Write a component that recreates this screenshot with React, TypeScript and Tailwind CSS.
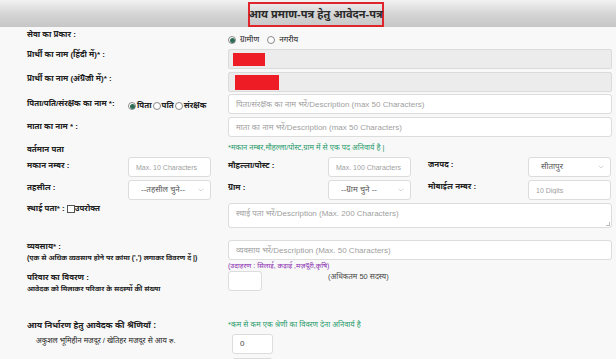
import { ChevronDown } from 'lucide-react';

const font = { fontFamily: '"Liberation Sans", "Noto Sans", sans-serif' };

function TextBox({ placeholder, value, small, className = '' }: { placeholder?: string; value?: string; small?: boolean; className?: string }) {
  return (
    <input
      readOnly
      placeholder={placeholder}
      defaultValue={value}
      className={`h-[20px] border border-[#dcdcdc] rounded-[3px] bg-white font-normal text-[#444] placeholder:text-[#a0a0a0] outline-none ${
        small ? 'px-[7px] text-[7px]' : 'px-[7px] text-[8px]'
      } ${className}`}
    />
  );
}

function SelectBox({ label }: { label: string }) {
  return (
    <div className="h-[20px] w-[83px] border border-[#dcdcdc] rounded-[3px] bg-white pl-[12px] pr-[5px] flex items-center justify-between text-[8px] font-normal text-[#555]">
      <span>{label}</span>
      <ChevronDown className="w-[8px] h-[8px] text-[#aaa]" strokeWidth={1.5} />
    </div>
  );
}

function Radio({ checked, label, tight }: { checked?: boolean; label: string; tight?: boolean }) {
  return (
    <span className={`flex items-center ${tight ? 'gap-[1px]' : 'gap-[4px]'}`}>
      <span className="w-[8px] h-[8px] rounded-full border border-[#8a8a8a] bg-white flex items-center justify-center">
        {checked && <span className="w-[5px] h-[5px] rounded-full bg-[#2f6d55]" />}
      </span>
      <span>{label}</span>
    </span>
  );
}

export default function App() {
  return (
    <div className="w-[616px] h-[359px] overflow-hidden bg-[#f8f8f8] text-[#222]" style={font}>
      {/* Header band */}
      <div className="h-[27px] bg-gradient-to-b from-[#f2f2f2] via-[#d6d6d6] to-[#c6c6c6] flex justify-center">
        <div className="mt-[2px] ml-[15px] w-[136px] h-[25px] border-2 border-[#e0242c] flex items-center justify-center text-[11px] font-bold text-[#2a2a2a] whitespace-nowrap">
          आय प्रमाण-पत्र हेतु आवेदन-पत्र
        </div>
      </div>

      <div className="pl-[27px] pr-[4px] text-[8px] font-bold">
        {/* सेवा का प्रकार */}
        <div className="h-[19px] grid grid-cols-[201px_1fr]">
          <div className="pt-[2px]">सेवा का प्रकार :</div>
          <div className="pt-[7px] flex items-center gap-[8px] font-normal text-[8px]">
            <Radio checked label="ग्रामीण" />
            <Radio label="नगरीय" />
          </div>
        </div>

        {/* Hindi name */}
        <div className="mt-[3px] grid grid-cols-[201px_1fr]">
          <div>प्रार्थी का नाम (हिंदी में)* :</div>
          <div className="h-[20px] border border-[#dadada] rounded-[2px] bg-[#ececec] pl-[4px] pt-[3px]">
            <div className="w-[32px] h-[13px] bg-[#ee1c25]" />
          </div>
        </div>

        {/* English name */}
        <div className="mt-[3px] grid grid-cols-[201px_1fr]">
          <div className="pt-[1px]">प्रार्थी का नाम (अंग्रेजी में)* :</div>
          <div className="h-[20px] border border-[#dadada] rounded-[2px] bg-[#ececec] pl-[6px] pt-[2px]">
            <div className="w-[44px] h-[15px] bg-[#ee1c25]" />
          </div>
        </div>

        {/* Father */}
        <div className="mt-[2px] grid grid-cols-[101px_100px_1fr]">
          <div className="pt-[4px]">पिता/पति/संरक्षक का नाम *:</div>
          <div className="pt-[6px] flex items-start gap-[1px] text-[8px]">
            <Radio checked tight label="पिता" />
            <Radio tight label="पति" />
            <Radio tight label="संरक्षक" />
          </div>
          <TextBox className="w-full" placeholder="पिता/संरक्षक का नाम भरें/Description (max 50 Characters)" />
        </div>

        {/* Mother */}
        <div className="mt-[3px] grid grid-cols-[201px_1fr]">
          <div className="pt-[4px]">माता का नाम * :</div>
          <TextBox className="w-full" placeholder="माता का नाम भरें/Description (max 50 Characters)" />
        </div>

        {/* वर्तमान पता */}
        <div className="mt-[2px] h-[16px] grid grid-cols-[201px_1fr] items-center">
          <div className="pt-[5px]">वर्तमान पता</div>
          <div className="font-normal text-[#1f9a6a] text-[7.5px]">*मकान नम्बर,मौहल्ला/पोस्ट,ग्राम में से एक पद अनिवार्य है |</div>
        </div>

        {/* Row: मकान / मौहल्ला / जनपद */}
        <div className="mt-[2px] grid grid-cols-[101px_100px_100px_100px_100px_1fr]">
          <div className="pt-[3px]">मकान नम्बर :</div>
          <TextBox small className="w-[83px]" placeholder="Max. 10 Characters" />
          <div className="pt-[3px]">मौहल्ला/पोस्ट :</div>
          <TextBox small className="w-[83px]" placeholder="Max. 100 Characters" />
          <div className="pt-[2px]">जनपद :</div>
          <SelectBox label="सीतापुर" />
        </div>

        {/* Row: तहसील / ग्राम / मोबाईल */}
        <div className="mt-[3px] grid grid-cols-[101px_100px_100px_100px_100px_1fr]">
          <div className="pt-[2px]">तहसील :</div>
          <SelectBox label="--तहसील चुने--" />
          <div className="pt-[2px]">ग्राम :</div>
          <SelectBox label="--ग्राम चुने --" />
          <div className="pt-[1px]">मोबाईल नम्बर :</div>
          <TextBox small className="w-[83px]" placeholder="10 Digits" />
        </div>

        {/* स्थाई पता */}
        <div className="mt-[3px] grid grid-cols-[201px_1fr]">
          <div className="flex items-start">
            स्थाई पता* :
            <span className="ml-[2px] mt-[2px] inline-block w-[8px] h-[8px] border border-[#555] bg-white" />
            <span>उपरोक्त</span>
          </div>
          <div className="relative h-[25px] border border-[#dcdcdc] rounded-[3px] bg-white px-[7px] pt-[4px] text-[8px] font-normal text-[#a0a0a0]">
            स्थाई पता भरें/Description (Max. 200 Characters)
            <span className="absolute right-[1px] bottom-[1px] w-[4px] h-[4px] border-r border-b border-[#bbb]" />
          </div>
        </div>

        {/* व्यवसाय */}
        <div className="mt-[12px] grid grid-cols-[201px_1fr]">
          <div className="pt-[1px] leading-[11px]">
            <div>व्यवसाय* :</div>
            <div className="text-[7px]">(एक से अधिक व्यवसाय होने पर कांमा (',') लगाकर विवरण दें |)</div>
          </div>
          <div>
            <TextBox className="w-full" placeholder="व्यवसाय भरें/Description (Max. 50 Characters)" />
            <div className="mt-[1px] h-[10px] leading-[10px] font-normal text-[7px] text-[#8a2bb0]">(उदाहरण : सिलाई, कढ़ाई ,मज़दूरी,कृषि)</div>
          </div>
        </div>

        {/* परिवार */}
        <div className="grid grid-cols-[201px_100px_1fr]">
          <div className="pt-[1px] leading-[11px]">
            <div>परिवार का विवरण :</div>
            <div className="text-[7px]">आवेदक को मिलाकर परिवार के सदस्यों की संख्या</div>
          </div>
          <TextBox className="w-[34px] h-[19px]" />
          <div className="font-normal text-[7.5px] text-[#444]">(अधिकतम 50 सदस्य)</div>
        </div>

        {/* आय निर्धारण */}
        <div className="mt-[25px] grid grid-cols-[201px_1fr]">
          <div className="text-[8.5px]">आय निर्धारण हेतु आवेदक की श्रेणियाँ :</div>
          <div className="font-normal text-[7.5px] text-[#1f9a6a]">*कम से कम एक श्रेणी का विवरण देना अनिवार्य है</div>
        </div>

        <div className="mt-[2px] grid grid-cols-[205px_1fr]">
          <div className="pl-[9px] pt-[1px] font-normal text-[7.5px]">अकुशल भूमिहीन मजदूर / खेतिहर मजदूर से आय रु.</div>
          <TextBox className="w-[41px] h-[19px]" value="0" />
        </div>

        <div className="mt-[4px] grid grid-cols-[205px_1fr]">
          <div className="pl-[60px] font-normal text-[7.5px]">अर्धकुशल श्रमिक से आय रु.</div>
          <TextBox className="w-[41px] h-[19px]" value="0" />
        </div>
      </div>
    </div>
  );
}
